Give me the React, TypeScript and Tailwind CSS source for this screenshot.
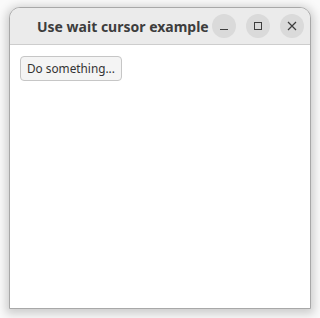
export default function App() {
  return (
    <div className="w-[320px] h-[318px] bg-[#fafafa] pt-[7px] pl-[9px]" style={{ fontFamily: '"Noto Sans", "Open Sans", sans-serif' }}>
      <div className="w-[302px] h-[302px] flex flex-col rounded-t-[11px] border border-[#a8a8a8] bg-white shadow-[0_2px_10px_3px_rgba(0,0,0,0.18)] overflow-hidden">
        <div className="h-[37px] flex items-center bg-[#ebebeb] border-b border-[#cdcdcd] shrink-0">
          <span className="ml-[27px] text-[14px] font-bold text-[#3d3d3d]">Use wait cursor example</span>
          <div className="ml-auto mr-[6px] flex items-center gap-[10px]">
            <div className="w-[24px] h-[24px] rounded-full bg-[#dadada] flex items-center justify-center">
              <div className="w-[8px] h-[1px] bg-[#3d3d3d] mt-[6px]" />
            </div>
            <div className="w-[24px] h-[24px] rounded-full bg-[#dadada] flex items-center justify-center">
              <div className="w-[8px] h-[8px] border border-[#3d3d3d]" />
            </div>
            <div className="w-[24px] h-[24px] rounded-full bg-[#dadada] flex items-center justify-center">
              <svg width="10" height="10" viewBox="0 0 10 10">
                <path d="M1 1 L9 9 M9 1 L1 9" stroke="#3d3d3d" strokeWidth="1.2" />
              </svg>
            </div>
          </div>
        </div>
        <div className="flex-1 p-[10px]">
          <button className="h-[25px] px-[6px] rounded-[4px] border border-[#c6c6c6] bg-[#f4f4f4] text-[11.8px] text-[#333] leading-none">
            Do something...
          </button>
        </div>
      </div>
    </div>
  );
}
